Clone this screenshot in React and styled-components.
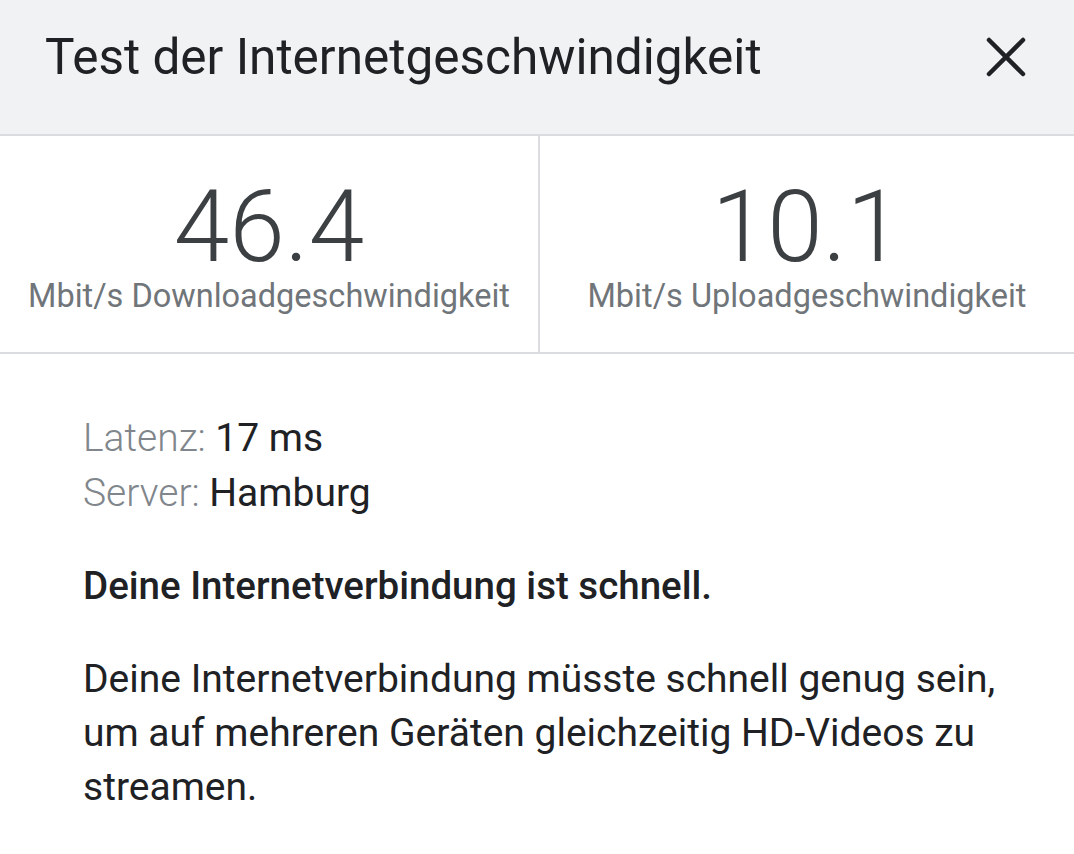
import React from "react";
import styled, { createGlobalStyle } from "styled-components";

const GlobalStyle = createGlobalStyle`
  html, body {
    margin: 0;
    padding: 0;
    background: #ffffff;
    font-family: Roboto, "Noto Sans", sans-serif;
  }
`;

const Dialog = styled.div`
  width: 1074px;
  min-height: 854px;
  background: #ffffff;
`;

const Header = styled.div`
  height: 136px;
  background: #f1f2f4;
  border-bottom: 2px solid #dadce0;
  display: flex;
  align-items: center;
  justify-content: space-between;
  padding: 0 46px 0 45px;
  box-sizing: border-box;
`;

const Title = styled.h1`
  margin: 0 0 20px 0;
  font-size: 49.5px;
  font-weight: 400;
  color: #202124;
`;

const CloseButton = styled.button`
  border: none;
  background: none;
  padding: 0;
  margin-bottom: 20px;
  width: 44px;
  height: 44px;
  display: flex;
  align-items: center;
  justify-content: center;
  cursor: pointer;
`;

const Stats = styled.div`
  display: grid;
  grid-template-columns: 540px 1fr;
  height: 216px;
  border-bottom: 2px solid #dadce0;
`;

const Stat = styled.div`
  display: flex;
  flex-direction: column;
  align-items: center;
  justify-content: center;
  border-right: ${({ $divider }) => ($divider ? "2px solid #dadce0" : "none")};
  padding-top: 4px;
`;

const StatValue = styled.div`
  font-size: 100px;
  font-weight: 300;
  color: #3c4043;
  line-height: 100px;
`;

const StatLabel = styled.div`
  font-size: 32.5px;
  color: #70757a;
  line-height: 38px;
`;

const Body = styled.div`
  padding: 57px 40px 0 83px;
`;

const InfoList = styled.div`
  display: flex;
  flex-direction: column;
`;

const InfoRow = styled.div`
  font-size: 39px;
  line-height: 55px;
  color: #202124;
`;

const InfoLabel = styled.span`
  font-weight: 300;
  color: #80868b;
`;

const Verdict = styled.p`
  margin: 38px 0 0 0;
  font-size: 38.5px;
  font-weight: 500;
  line-height: 54px;
  color: #202124;
`;

const Description = styled.p`
  margin: 39px 0 0 0;
  font-size: 39px;
  line-height: 54px;
  color: #202124;
  max-width: 925px;
`;

const App = () => {
  const stats = [
    { value: "46.4", label: "Mbit/s Downloadgeschwindigkeit" },
    { value: "10.1", label: "Mbit/s Uploadgeschwindigkeit" },
  ];

  return (
    <>
      <GlobalStyle />
      <Dialog>
        <Header>
          <Title>Test der Internetgeschwindigkeit</Title>
          <CloseButton aria-label="Schließen">
            <svg width="40" height="40" viewBox="0 0 40 40">
              <path
                d="M3 3 L37 37 M37 3 L3 37"
                stroke="#202124"
                strokeWidth="4.5"
                strokeLinecap="round"
              />
            </svg>
          </CloseButton>
        </Header>

        <Stats>
          {stats.map((stat, index) => (
            <Stat key={index} $divider={index === 0}>
              <StatValue>{stat.value}</StatValue>
              <StatLabel>{stat.label}</StatLabel>
            </Stat>
          ))}
        </Stats>

        <Body>
          <InfoList>
            <InfoRow>
              <InfoLabel>Latenz: </InfoLabel>17 ms
            </InfoRow>
            <InfoRow>
              <InfoLabel>Server: </InfoLabel>Hamburg
            </InfoRow>
          </InfoList>
          <Verdict>Deine Internetverbindung ist schnell.</Verdict>
          <Description>
            Deine Internetverbindung müsste schnell genug sein, um auf
            mehreren Geräten gleichzeitig HD-Videos zu streamen.
          </Description>
        </Body>
      </Dialog>
    </>
  );
};

export default App;
